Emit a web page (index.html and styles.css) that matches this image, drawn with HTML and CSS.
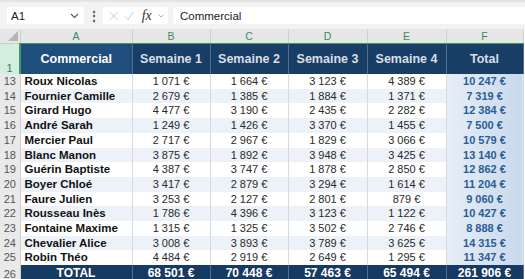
FILE: index.html
```html
<!DOCTYPE html>
<html lang="fr">
<head>
    <meta charset="UTF-8">
    <title>Ventes hebdomadaires</title>
    <link rel="stylesheet" href="styles.css">
</head>
<body>
    <div class="formula-bar">
        <div class="namebox">
            <span>A1</span>
            <svg class="chev" width="9" height="6" viewBox="0 0 9 6"><path d="M1 1l3.5 3.5L8 1" fill="none" stroke="#555" stroke-width="1.1"/></svg>
        </div>
        <span class="dots">&#8942;</span>
        <div class="fx-tools">
            <svg width="12" height="12" viewBox="0 0 12 12"><path d="M1 1l10 10M11 1L1 11" stroke="#bbb" stroke-width="1"/></svg>
            <svg width="13" height="12" viewBox="0 0 13 12"><path d="M1 6.5l4 4L12 1" fill="none" stroke="#bbb" stroke-width="1"/></svg>
            <span class="fx">fx</span>
            <svg class="chev" width="8" height="6" viewBox="0 0 9 6"><path d="M1 1l3.5 3.5L8 1" fill="none" stroke="#888" stroke-width="1"/></svg>
        </div>
        <div class="formula">Commercial</div>
    </div>

    <table class="sheet">
        <colgroup>
            <col class="c-row">
            <col class="c-a">
            <col class="c-b">
            <col class="c-c">
            <col class="c-d">
            <col class="c-e">
            <col class="c-f">
        </colgroup>
        <thead>
            <tr class="letters">
                <th class="corner"><span class="tri"></span></th>
                <th>A</th><th>B</th><th>C</th><th>D</th><th>E</th><th>F</th>
            </tr>
        </thead>
        <tbody id="rows">
            <tr class="head">
                <td class="rn sel">1</td>
                <td class="h-name">Commercial</td>
                <td>Semaine 1</td>
                <td>Semaine 2</td>
                <td>Semaine 3</td>
                <td>Semaine 4</td>
                <td class="h-total">Total</td>
            </tr>
        </tbody>
    </table>

    <script>
      (function() {
        const data = [
          [13, 'Roux Nicolas', '1 071', '1 664', '3 123', '4 389', '10 247'],
          [14, 'Fournier Camille', '2 679', '1 385', '1 884', '1 371', '7 319'],
          [15, 'Girard Hugo', '4 477', '3 190', '2 435', '2 282', '12 384'],
          [16, 'André Sarah', '1 249', '1 426', '3 370', '1 455', '7 500'],
          [17, 'Mercier Paul', '2 717', '2 967', '1 829', '3 066', '10 579'],
          [18, 'Blanc Manon', '3 875', '1 892', '3 948', '3 425', '13 140'],
          [19, 'Guérin Baptiste', '4 387', '3 747', '1 878', '2 850', '12 862'],
          [20, 'Boyer Chloé', '3 417', '2 879', '3 294', '1 614', '11 204'],
          [21, 'Faure Julien', '3 253', '2 127', '2 801', '879', '9 060'],
          [22, 'Rousseau Inès', '1 786', '4 396', '3 123', '1 122', '10 427'],
          [23, 'Fontaine Maxime', '1 315', '1 325', '3 502', '2 746', '8 888'],
          [24, 'Chevalier Alice', '3 008', '3 893', '3 789', '3 625', '14 315'],
          [25, 'Robin Théo', '4 484', '2 919', '2 649', '1 295', '11 347']
        ];
        const body = document.getElementById('rows');
        data.forEach(r => {
          const tr = document.createElement('tr');
          tr.className = r[0] % 2 === 0 ? 'row even' : 'row';
          let html = '<td class="rn">' + r[0] + '</td><td class="name">' + r[1] + '</td>';
          for (let i = 2; i < 6; i++) {
            html += '<td class="num">' + r[i] + ' €</td>';
          }
          html += '<td class="tot">' + r[6] + ' €</td>';
          tr.innerHTML = html;
          body.appendChild(tr);
        });
        const total = document.createElement('tr');
        total.className = 'total';
        total.innerHTML = '<td class="rn">26</td><td>TOTAL</td><td>68 501 €</td><td>70 448 €</td><td>57 463 €</td><td>65 494 €</td><td>261 906 €</td>';
        body.appendChild(total);
      })();
    </script>
</body>
</html>
```

FILE: styles.css
```css
body {
  margin: 0;
  background: #fff;
  font-family: "Liberation Sans", Arial, sans-serif;
  overflow: hidden;
}

.formula-bar {
  display: flex;
  align-items: center;
  height: 29px;
  padding: 0 0 0 7px;
  background: #f3f3f3;
  box-sizing: border-box;
  border-top: 2px solid #e4e4e4;
}

.namebox,
.fx-tools,
.formula {
  display: flex;
  align-items: center;
  height: 17px;
  background: #fff;
  border-radius: 3px;
  font-size: 11.5px;
  color: #222;
}

.namebox {
  width: 77px;
  padding: 0 5px 0 4px;
  box-sizing: border-box;
  justify-content: space-between;
}

.dots {
  width: 19px;
  text-align: center;
  color: #555;
  font-size: 12px;
  font-weight: bold;
}

.fx-tools {
  width: 65px;
  padding: 0 4px 0 6px;
  box-sizing: border-box;
  gap: 6px;
}

.fx {
  font-family: "Liberation Serif", serif;
  font-style: italic;
  font-size: 14px;
  color: #333;
  margin-left: 1px;
}

.formula {
  flex: 1;
  margin-left: 5px;
  padding-left: 7px;
  border-radius: 3px 0 0 3px;
}

.sheet {
  border-collapse: collapse;
  table-layout: fixed;
  width: 523px;
  font-size: 11px;
}

.c-row { width: 20px; }
.c-a { width: 112px; }
.c-b { width: 78px; }
.c-c { width: 78px; }
.c-d { width: 79px; }
.c-e { width: 79px; }
.c-f { width: 77px; }

.sheet td,
.sheet th {
  padding: 0;
  overflow: hidden;
  white-space: nowrap;
}

.letters th {
  height: 14px;
  background: #e6e6e6;
  border-right: 1px solid #cfcfcf;
  border-bottom: 1px solid #3f9a63;
  color: #3e8a5c;
  font-weight: normal;
  font-size: 10.5px;
  line-height: 13px;
}

.letters .corner {
  position: relative;
  border-bottom-color: #cfcfcf;
}

.tri {
  position: absolute;
  right: 2px;
  bottom: 2px;
  width: 0;
  height: 0;
  border-left: 10px solid transparent;
  border-bottom: 10px solid #b5b5b5;
}

.rn {
  background: #e9e9e9;
  color: #555;
  text-align: center;
  font-size: 11px;
  vertical-align: bottom;
  border-right: 1px solid #cfcfcf;
}

.head td {
  height: 30px;
  background: #183e66;
  color: #d9dee6;
  font-weight: bold;
  font-size: 12.5px;
  text-align: center;
  border-right: 1px solid #4d6f93;
}

.head .rn.sel {
  background: #d3eedf;
  color: #2f7d4f;
  font-weight: normal;
  font-size: 11px;
  border-right: 2px solid #3f9a63;
}

.head .h-name {
  background: #1f4e7c;
  color: #fff;
}

.row td {
  height: 14.7px;
  line-height: 14.7px;
  border-right: 1px solid #d3dae3;
  color: #2a2a2a;
}

.row.even td {
  background: #edf2f8;
}

.row .rn,
.row.even .rn {
  background: #e9e9e9;
  border-right: 1px solid #cfcfcf;
  color: #555;
}

.row .name {
  font-weight: bold;
  color: #111;
  padding-left: 4px;
  font-size: 11.5px;
}

.row .num {
  text-align: center;
}

.row .tot,
.row.even .tot {
  background: linear-gradient(to right, #e6eef7, #c8d8eb);
  color: #2b5d94;
  font-weight: bold;
  text-align: center;
}

.total td {
  height: 15px;
  background: #163a62;
  color: #fff;
  font-weight: bold;
  font-size: 12px;
  text-align: center;
  border-right: 1px solid #4d6f93;
}

.total .rn {
  background: #e9e9e9;
  color: #555;
  font-weight: normal;
  font-size: 11px;
  border-right: 1px solid #cfcfcf;
}
```
